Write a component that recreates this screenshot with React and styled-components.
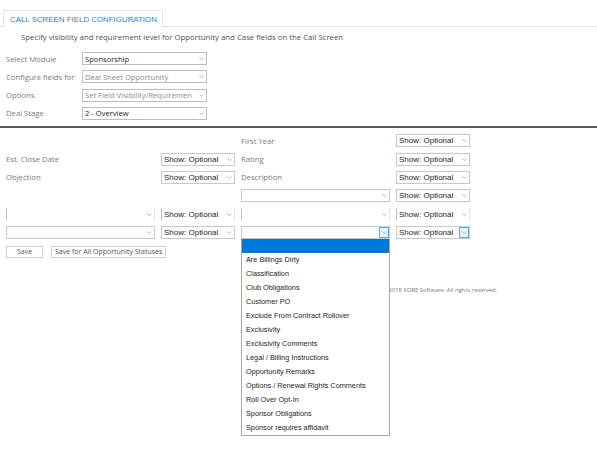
import styled, { createGlobalStyle } from 'styled-components'

const GlobalStyle = createGlobalStyle`
  html, body {
    margin: 0;
    padding: 0;
    background: #fff;
  }
  body {
    font-family: "Open Sans", "Noto Sans", sans-serif;
    color: #333;
  }
`

const listItems = [
  'Are Billings Dirty',
  'Classification',
  'Club Obligations',
  'Customer PO',
  'Exclude From Contract Rollover',
  'Exclusivity',
  'Exclusivity Comments',
  'Legal / Billing Instructions',
  'Opportunity Remarks',
  'Options / Renewal Rights Comments',
  'Roll Over Opt-In',
  'Sponsor Obligations',
  'Sponsor requires affidavit'
]

function Chevron() {
  return <svg width='5' height='3' viewBox='0 0 5 3'>
    <polyline points='0.5,0.5 2.5,2.5 4.5,0.5' fill='none' stroke='#999' strokeWidth='0.7' />
  </svg>
}

function Select({ value = '', kind = 'form', muted, open, sides }) {
  return <SelectBox $kind={kind} $sides={sides}>
    <SelectText $kind={kind} $muted={muted}>{value}</SelectText>
    <Arrow $open={open}><Chevron /></Arrow>
  </SelectBox>
}

export default function App() {
  return <Page>
    <GlobalStyle />
    <TabBar>
      <Tab>Call Screen Field Configuration</Tab>
    </TabBar>
    <Intro>Specify visibility and requirement level for Opportunity and Case fields on the Call Screen</Intro>

    <FormGrid>
      <Label>Select Module</Label>
      <Select value='Sponsorship' />
      <Label>Configure fields for</Label>
      <Select value='Deal Sheet Opportunity' muted />
      <Label>Options</Label>
      <Select value='Set Field Visibility/Requiremen' muted />
      <Label>Deal Stage</Label>
      <Select value='2 - Overview' />
    </FormGrid>

    <Divider />

    <FieldGrid>
      <span /><span />
      <Label>First Year</Label>
      <Select kind='show' value='Show: Optional' />

      <Label>Est. Close Date</Label>
      <Select kind='show' value='Show: Optional' />
      <Label>Rating</Label>
      <Select kind='show' value='Show: Optional' />

      <Label>Objection</Label>
      <Select kind='show' value='Show: Optional' />
      <Label>Description</Label>
      <Select kind='show' value='Show: Optional' />

      <span /><span />
      <Select kind='show' />
      <Select kind='show' value='Show: Optional' />

      <Select kind='show' sides />
      <Select kind='show' value='Show: Optional' sides />
      <Select kind='show' sides />
      <Select kind='show' value='Show: Optional' sides />

      <Select kind='show' />
      <Select kind='show' value='Show: Optional' />
      <MenuAnchor>
        <Select kind='show' open />
        <Menu>
          <MenuItem $active />
          {listItems.map(item => <MenuItem key={item}>{item}</MenuItem>)}
        </Menu>
      </MenuAnchor>
      <Select kind='show' value='Show: Optional' open />
    </FieldGrid>

    <Buttons>
      <Button $wide='37px'>Save</Button>
      <Button>Save for All Opportunity Statuses</Button>
    </Buttons>

    <Footer>Copyright © 2006-2018 KORE Software. All rights reserved.</Footer>
  </Page>
}

const Page = styled.div`
  width: 597px;
  min-height: 454px;
  padding-top: 10px;
  box-sizing: border-box;
`
const TabBar = styled.div`
  display: flex;
  padding-left: 3px;
  border-bottom: 1px solid #e2e2e2;
`
const Tab = styled.div`
  height: 16px;
  padding: 0 5px 0 6px;
  display: flex;
  align-items: center;
  border: 1px solid #e2e2e2;
  border-bottom: none;
  margin-bottom: -1px;
  background: #fff;
  color: #2a7fd4;
  text-transform: uppercase;
  font-family: "Liberation Sans", Arial, sans-serif;
  font-size: 7.9px;
`
const Intro = styled.div`
  padding: 3px 0 0 21px;
  height: 14px;
  font-size: 7.8px;
  line-height: 14px;
  color: #505050;
`
const FormGrid = styled.div`
  display: grid;
  grid-template-columns: 76px 125px;
  grid-auto-rows: 13px;
  row-gap: 5.3px;
  align-items: center;
  padding: 8px 0 0 6px;
`
const Label = styled.div`
  font-size: 7.7px;
  color: #7a7a7a;
  white-space: nowrap;
`
const SelectBox = styled.div`
  height: 13px;
  box-sizing: border-box;
  display: flex;
  align-items: center;
  background: #fff;
  border: 1px solid ${p => p.$kind === 'form' ? '#bdbdbd' : '#c8c8c8'};
  border-top-color: ${p => p.$sides ? 'transparent' : ''};
  border-bottom-color: ${p => p.$sides ? 'transparent' : ''};
  border-left-color: ${p => p.$sides ? '#bdbdbd' : ''};
  border-right-color: ${p => p.$sides ? '#e0e0e0' : ''};
  min-width: 0;
`
const SelectText = styled.span`
  flex: 1;
  padding-left: 2px;
  overflow: hidden;
  white-space: nowrap;
  font-family: ${p => p.$kind === 'form' ? '"Open Sans", sans-serif' : '"Liberation Sans", Arial, sans-serif'};
  font-size: ${p => p.$kind === 'form' ? '7.6px' : '8px'};
  color: ${p => p.$muted ? '#8a8a8a' : '#1e1e1e'};
`
const Arrow = styled.span`
  width: 10px;
  height: 11px;
  display: flex;
  align-items: center;
  justify-content: center;
  box-sizing: border-box;
  background: ${p => p.$open ? '#e5f1fb' : 'transparent'};
  border: 1px solid ${p => p.$open ? '#5fa7e0' : 'transparent'};
`
const Divider = styled.div`
  height: 2px;
  background: #5a5a5a;
  margin-top: 6px;
`
const FieldGrid = styled.div`
  display: grid;
  grid-template-columns: 149px 74px 149px 74px;
  column-gap: 6px;
  grid-auto-rows: 13px;
  row-gap: 5.3px;
  align-items: center;
  padding: 6.5px 0 0 6px;
`
const MenuAnchor = styled.div`
  position: relative;
  height: 13px;
`
const Menu = styled.div`
  position: absolute;
  top: 13px;
  left: 0;
  width: 149px;
  box-sizing: border-box;
  border: 1px solid #a9a9a9;
  border-top: none;
  background: #fff;
  z-index: 2;
`
const MenuItem = styled.div`
  height: 14px;
  line-height: 14px;
  padding-left: 4px;
  font-family: "Liberation Sans", Arial, sans-serif;
  font-size: 7.3px;
  color: #1e1e1e;
  white-space: nowrap;
  background: ${p => p.$active ? '#0078d7' : 'transparent'};
`
const Buttons = styled.div`
  display: flex;
  gap: 8px;
  padding: 7px 0 0 6px;
`
const Button = styled.div`
  height: 12px;
  width: ${p => p.$wide || 'auto'};
  padding: 0 ${p => p.$wide ? '0' : '3px'};
  box-sizing: border-box;
  display: flex;
  align-items: center;
  justify-content: center;
  border: 1px solid #cfcfcf;
  background: #fff;
  font-size: 7px;
  color: #555;
`
const Footer = styled.div`
  width: 497px;
  text-align: right;
  padding-top: 28px;
  font-size: 5.8px;
  color: #777;
`
